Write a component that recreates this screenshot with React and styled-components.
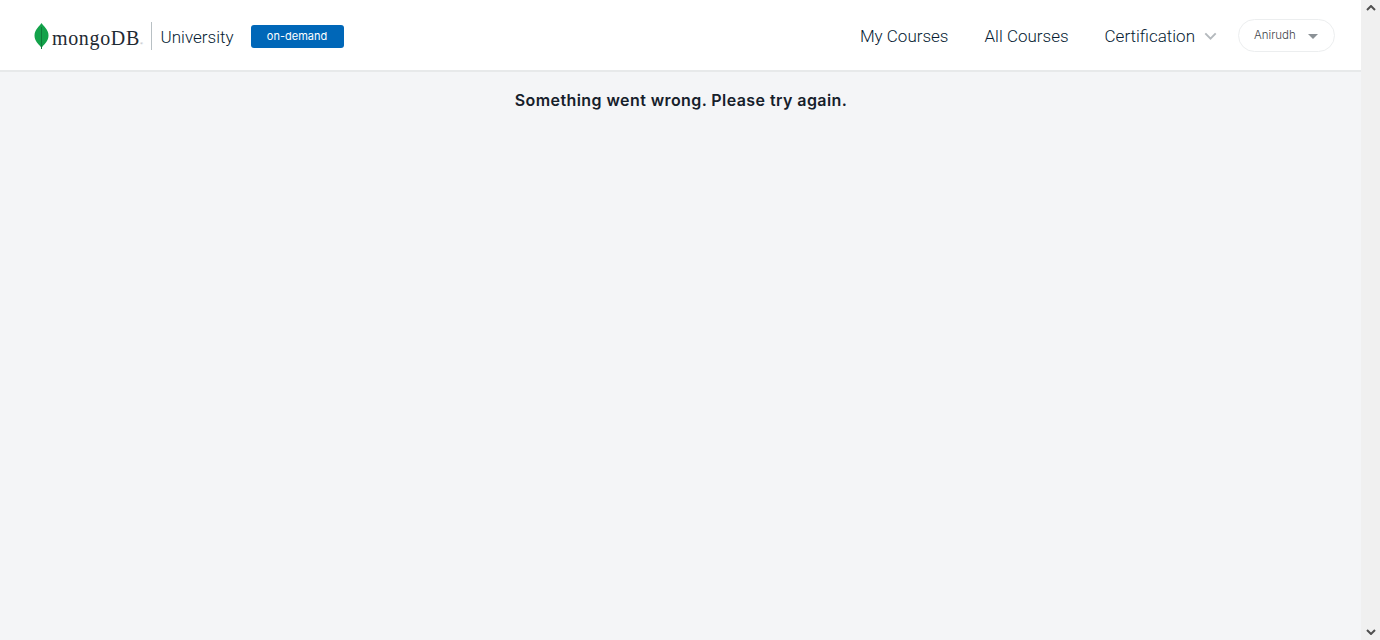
import React from "react";
import styled, { createGlobalStyle } from "styled-components";

const GlobalStyle = createGlobalStyle`
  html, body {
    margin: 0;
    padding: 0;
    height: 100%;
    overflow: hidden;
    background: #f4f5f7;
    font-family: "Inter", "Liberation Sans", sans-serif;
  }
`;

const Page = styled.div`
  display: flex;
  width: 1380px;
  height: 640px;
`;

const Main = styled.div`
  flex: 1;
  display: flex;
  flex-direction: column;
  min-width: 0;
`;

const Header = styled.header`
  display: flex;
  align-items: center;
  justify-content: space-between;
  box-sizing: border-box;
  height: 72px;
  padding: 0 26px 0 34px;
  background: #fff;
  border-bottom: 2px solid #e7e9ea;
`;

const Brand = styled.div`
  display: flex;
  align-items: center;
  padding-top: 2px;
`;

const Logo = styled.div`
  display: flex;
  align-items: center;
  gap: 3px;
  height: 28px;
  padding-right: 7px;
  border-right: 1px solid #b8c0c4;
`;

const Wordmark = styled.span`
  display: flex;
  align-items: baseline;
  margin-top: 5px;
  font-family: "Liberation Serif", serif;
  font-size: 20px;
  letter-spacing: 0.65px;
  color: #1f2a33;
`;

const Registered = styled.span`
  font-size: 4px;
  color: #8a9299;
`;

const Product = styled.span`
  margin-left: 9px;
  padding-top: 2px;
  font-family: "Roboto", sans-serif;
  font-size: 17px;
  font-weight: 300;
  color: #061c33;
`;

const Badge = styled.span`
  display: flex;
  align-items: center;
  justify-content: center;
  width: 93px;
  height: 23px;
  margin-left: 17px;
  border-radius: 3px;
  background: #0067b8;
  color: #fff;
  font-size: 11px;
`;

const Nav = styled.nav`
  display: flex;
  align-items: center;
`;

const NavLink = styled.a`
  display: flex;
  align-items: center;
  gap: 9px;
  margin-left: 36px;
  padding-top: 2px;
  font-family: "Roboto", sans-serif;
  font-size: 17px;
  font-weight: 300;
  color: #061c33;
`;

const UserMenu = styled.div`
  display: flex;
  align-items: center;
  justify-content: space-between;
  box-sizing: border-box;
  width: 97px;
  height: 33px;
  margin-left: 21px;
  padding: 0 16px 0 15px;
  border: 1px solid #eceeef;
  border-radius: 17px;
  color: #3f454b;
  font-size: 11.5px;
  font-weight: 300;
`;

const Caret = styled.span`
  width: 0;
  height: 0;
  margin-top: 2px;
  border-left: 5px solid transparent;
  border-right: 5px solid transparent;
  border-top: 5px solid #8b9196;
`;

const Content = styled.main`
  flex: 1;
  padding: 18px 0 0 1px;
  text-align: center;
  font-size: 16px;
  font-weight: 600;
  letter-spacing: 0.42px;
  line-height: 20px;
  color: #16202b;
`;

const Scrollbar = styled.div`
  display: flex;
  flex-direction: column;
  justify-content: space-between;
  align-items: center;
  width: 19px;
  padding: 5px 0;
  box-sizing: border-box;
  background: #f0f0f0;
`;

const Leaf = () => (
  <svg width="15" height="28" viewBox="0 0 15 28">
    <path d="M7.5 1C9.5 4 14.5 7.5 14.5 13.5C14.5 19 10.5 22 8.2 25L6.8 25C4.5 22 0.5 19 0.5 13.5C0.5 7.5 5.5 4 7.5 1Z" fill="#13a24a" />
    <path d="M7.5 5V27" stroke="#0e7a3a" strokeWidth="1" />
  </svg>
);

const Chevron = ({ width, height, color, strokeWidth, up }) => (
  <svg width={width} height={height} viewBox="0 0 10 6">
    <path
      d={up ? "M1 5L5 1L9 5" : "M1 1L5 5L9 1"}
      fill="none"
      stroke={color}
      strokeWidth={strokeWidth}
    />
  </svg>
);

export default function App() {
  return (
    <Page>
      <GlobalStyle />
      <Main>
        <Header>
          <Brand>
            <Logo>
              <Leaf />
              <Wordmark>
                mongoDB<Registered>®</Registered>
              </Wordmark>
            </Logo>
            <Product>University</Product>
            <Badge>on-demand</Badge>
          </Brand>
          <Nav>
            <NavLink>My Courses</NavLink>
            <NavLink>All Courses</NavLink>
            <NavLink>
              Certification
              <Chevron width={13} height={8} color="#b4b9bd" strokeWidth={1.5} />
            </NavLink>
            <UserMenu>
              Anirudh
              <Caret />
            </UserMenu>
          </Nav>
        </Header>
        <Content>Something went wrong. Please try again.</Content>
      </Main>
      <Scrollbar>
        <Chevron up width={10} height={6} color="#505050" strokeWidth={2} />
        <Chevron width={10} height={6} color="#505050" strokeWidth={2} />
      </Scrollbar>
    </Page>
  );
}
